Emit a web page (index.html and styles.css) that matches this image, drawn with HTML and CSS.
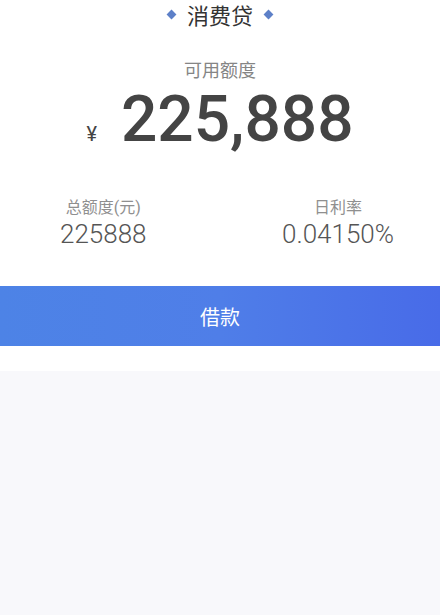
FILE: index.html
```html
<!DOCTYPE html>
<html lang="zh-CN">
<head>
    <meta charset="UTF-8">
    <meta name="viewport" content="width=device-width, initial-scale=1.0">
    <title>消费贷</title>
    <link rel="stylesheet" href="styles.css">
</head>
<body>
    <div class="card">
        <div class="title">
            <span class="diamond"></span>
            <span>消费贷</span>
            <span class="diamond"></span>
        </div>
        <div class="label">可用额度</div>
        <div class="amount">
            <span class="yen">¥</span>
            <span class="number">225,888</span>
        </div>
        <div class="stats">
            <div class="stat">
                <div class="stat-label">总额度(元)</div>
                <div class="stat-value">225888</div>
            </div>
            <div class="stat">
                <div class="stat-label">日利率</div>
                <div class="stat-value">0.04150%</div>
            </div>
        </div>
        <button class="borrow">借款</button>
    </div>
    <div class="gap"></div>
</body>
</html>
```

FILE: styles.css
```css
body {
    margin: 0;
    font-family: Roboto, "Noto Sans CJK SC", sans-serif;
    background-color: #f8f8fb;
    height: 615px;
}

.card {
    background: #fff;
}

.title {
    display: flex;
    justify-content: center;
    align-items: center;
    gap: 10px;
    height: 28px;
    font-size: 22px;
    color: #333;
}

.diamond {
    width: 7px;
    height: 7px;
    background: #5d80c8;
    transform: rotate(45deg);
    margin: 0 2px;
}

.label {
    margin-top: 31px;
    text-align: center;
    font-size: 18px;
    line-height: 24px;
    color: #858585;
}

.amount {
    display: flex;
    justify-content: center;
    align-items: baseline;
    gap: 24px;
    margin-top: 5px;
    color: #444;
}

.yen {
    font-size: 20px;
}

.number {
    font-size: 64px;
    line-height: 64px;
    font-weight: 500;
}

.stats {
    display: flex;
    justify-content: space-between;
    padding: 0 46px 0 60px;
    margin-top: 45px;
}

.stat {
    text-align: center;
}

.stat-label {
    font-size: 16px;
    line-height: 22px;
    color: #8f8f8f;
}

.stat-value {
    font-size: 26px;
    line-height: 30px;
    font-weight: 300;
    color: #555;
}

.borrow {
    display: block;
    width: 100%;
    height: 60px;
    margin-top: 37px;
    border: none;
    background: linear-gradient(90deg, #4d83e6, #4f7ee8 50%, #486be8);
    color: #fff;
    font-family: inherit;
    font-size: 20px;
}

.gap {
    height: 25px;
    background: #fff;
}
```
